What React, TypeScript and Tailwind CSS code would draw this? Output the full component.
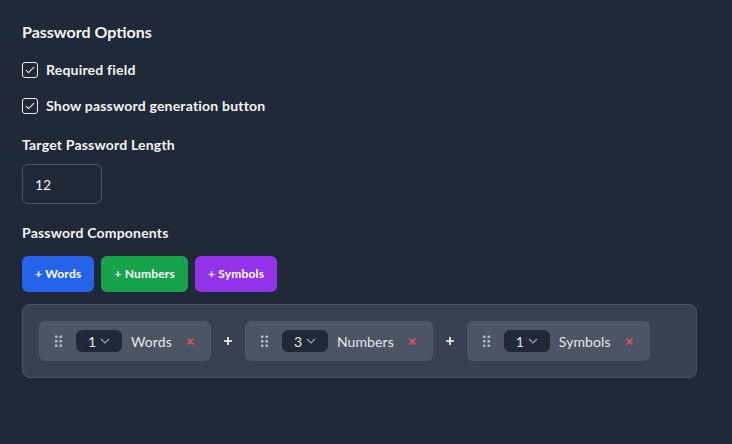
import React from "react";

const Check = () => (
  <span className="flex h-4 w-4 items-center justify-center rounded-[3px] border border-gray-200 bg-transparent">
    <svg viewBox="0 0 16 16" className="h-3 w-3" fill="none" stroke="#e5e7eb" strokeWidth="1.5" strokeLinecap="round" strokeLinejoin="round">
      <path d="M3 8.5l3 3 7-7" />
    </svg>
  </span>
);

const Grip = () => (
  <svg width="7" height="12" viewBox="0 0 7 12" className="shrink-0">
    {[0, 1, 2].map((r) =>
      [0, 1].map((c) => <rect key={`${r}${c}`} x={c * 4.5} y={r * 4.5 + 0.5} width="2.5" height="2.5" rx="0.4" fill="#b6bcc6" />)
    )}
  </svg>
);

const Item = ({ n, label }: { n: string; label: string }) => (
  <div className="flex h-10 items-center rounded-md bg-[#4b5563] pl-[16px] pr-[17px]">
    <Grip />
    <div className="ml-[14px] flex h-[22px] w-[46px] items-center gap-[4px] rounded-md bg-[#1f2937] pl-[12px]">
      <span className="text-[14px] text-[#e5e7eb]">{n}</span>
      <svg width="10" height="6" viewBox="0 0 10 6" fill="none" stroke="#9ca3af" strokeWidth="1.2">
        <path d="M1 1l4 4 4-4" />
      </svg>
    </div>
    <span className="ml-[9px] text-[14px] tracking-[0.1px] text-[#e5e7eb]">{label}</span>
    <svg width="7" height="7" viewBox="0 0 7 7" className="ml-[15px]" stroke="#ef5350" strokeWidth="1.6" strokeLinecap="round">
      <path d="M1 1l5 5M6 1l-5 5" />
    </svg>
  </div>
);

const Plus = () => (
  <svg width="8" height="8" viewBox="0 0 8 8" stroke="#ffffff" strokeWidth="1.6">
    <path d="M4 0v8M0 4h8" />
  </svg>
);

export default function App() {
  return (
    <div
      className="min-h-[444px] w-full bg-[#1f2937] px-[22px] pt-[22px] text-white"
      style={{ fontFamily: 'Lato, "Segoe UI", sans-serif' }}
    >
      <h2 className="text-[16px] font-bold leading-[20px] text-[#f3f4f6]">Password Options</h2>
      <div className="mt-[17px] flex items-center gap-2">
        <Check />
        <span className="text-[14px] font-bold tracking-[0.2px] text-[#f3f4f6]">Required field</span>
      </div>
      <div className="mt-[15px] flex items-center gap-2">
        <Check />
        <span className="text-[14px] font-bold tracking-[0.2px] text-[#f3f4f6]">Show password generation button</span>
      </div>
      <div className="mt-[18px] text-[14px] font-bold tracking-[0.2px] text-[#f3f4f6]">Target Password Length</div>
      <div className="mt-[9px] flex h-10 w-20 items-center rounded-md border border-[#4b5563] bg-[#1f2937] px-3 text-[14px] text-[#f3f4f6]">
        12
      </div>
      <div className="mt-[18px] text-[14px] font-bold tracking-[0.2px] text-[#f3f4f6]">Password Components</div>
      <div className="mt-[13px] flex gap-[7px]">
        <button className="h-9 rounded-md bg-[#2563eb] px-[13px] text-[12px] font-bold tracking-[0.2px] text-white">+ Words</button>
        <button className="h-9 rounded-md bg-[#16a34a] px-[13px] text-[12px] font-bold tracking-[0.2px] text-white">+ Numbers</button>
        <button className="h-9 rounded-md bg-[#9333ea] px-[13px] text-[12px] font-bold tracking-[0.2px] text-white">+ Symbols</button>
      </div>
      <div className="mt-3 flex w-[675px] items-center gap-[13px] rounded-lg border border-[#4b5563] bg-[#374151] px-4 py-4">
        <Item n="1" label="Words" />
        <Plus />
        <Item n="3" label="Numbers" />
        <Plus />
        <Item n="1" label="Symbols" />
      </div>
    </div>
  );
}
